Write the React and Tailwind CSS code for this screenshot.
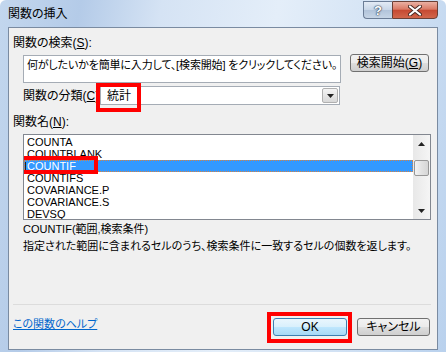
import React from 'react'

const ITEMS = ['COUNTA', 'COUNTBLANK', 'COUNTIF', 'COUNTIFS', 'COVARIANCE.P', 'COVARIANCE.S', 'DEVSQ']

function Arrow({ up }) {
  return (
    <svg width="7" height="4" viewBox="0 0 7 4">
      {up ? <path d="M0 4 L7 4 L3.5 0 Z" fill="#222" /> : <path d="M0 0 L7 0 L3.5 4 Z" fill="#222" />}
    </svg>
  )
}

export default function App() {
  return (
    <div className="w-[446px] h-[352px] overflow-hidden flex flex-col rounded-t-[6px] bg-[linear-gradient(100deg,#c3d7ee_0%,#b4cbe8_16%,#d5e3f4_32%,#e4eef9_55%,#d2e2f4_78%,#b9d1ed_100%)] font-['Liberation_Sans','Noto_Sans_CJK_JP',sans-serif] [font-feature-settings:'palt'] text-black">
      {/* title bar */}
      <div className="h-[27px] flex items-start shrink-0">
        <div className="pl-[8px] pt-[6px] text-[12px] leading-[16px]">関数の挿入</div>
        <div className="ml-auto mr-[8px] mt-[1px] flex h-[18px]">
          <div className="w-[29px] h-[18px] rounded-bl-[4px] border border-r-0 border-[#6b7d96] bg-[linear-gradient(180deg,#e3ebf5_0%,#c9d7e8_48%,#b2c4da_52%,#c6d5e6_100%)] flex items-center justify-center text-[13px] font-bold leading-none text-white [text-shadow:0_0_1px_#34465e,0_0_1px_#34465e,0_0_2px_#34465e]">?</div>
          <div className="w-[46px] h-[18px] rounded-br-[4px] border border-[#6b4036] bg-[linear-gradient(180deg,#eab0a3_0%,#da7a66_45%,#c64a32_52%,#d2664b_100%)] flex items-center justify-center">
            <svg width="14" height="11" viewBox="0 0 14 11">
              <path d="M2 1.5 L12 9.5 M12 1.5 L2 9.5" stroke="#4a2a24" strokeWidth="4" strokeLinecap="round" />
              <path d="M2 1.5 L12 9.5 M12 1.5 L2 9.5" stroke="#fff" strokeWidth="2.2" strokeLinecap="round" />
            </svg>
          </div>
        </div>
      </div>

      {/* client area */}
      <div className="mx-[8px] mb-[2px] flex-1 border border-[#7a8ba1] bg-[#f0f0f0] flex flex-col text-[12px] leading-[16px]">
        <div className="mt-[7px] pl-[4px]">関数の検索(<span className="underline">S</span>):</div>

        <div className="mt-[4px] pl-[14px] flex items-start">
          <div className="w-[318px] h-[28px] border border-[#a5acb5] bg-white pl-[3px] pt-[1px] text-[11px] tracking-[-0.15px] whitespace-nowrap overflow-hidden">
            何がしたいかを簡単に入力して、[検索開始] をクリックしてください。
          </div>
          <button className="ml-[9px] -mt-[1px] w-[79px] h-[18px] rounded-[3px] border border-[#707070] bg-[linear-gradient(180deg,#f2f2f2_0%,#ebebeb_48%,#dddddd_52%,#cfcfcf_100%)] flex items-center justify-center leading-none whitespace-nowrap">
            検索開始(<span className="underline">G</span>)
          </button>
        </div>

        <div className="mt-[3px] pl-[14px] flex items-center h-[19px]">
          <div className="w-[77px] whitespace-nowrap">関数の分類(<span className="underline">C</span>):</div>
          <div className="relative w-[240px] h-[19px] border border-[#a5acb5] bg-white flex items-center">
            <span className="pl-[6px]">統計</span>
            <div className="ml-auto mr-[1px] w-[16px] h-[15px] border border-[#b0b0b0] rounded-[2px] bg-[linear-gradient(180deg,#f4f4f4_0%,#e6e6e6_50%,#d8d8d8_100%)] flex items-center justify-center">
              <Arrow />
            </div>
            <div className="absolute left-[-5px] top-[-4px] w-[45px] h-[29px] border-[4px] border-[#f00]" />
          </div>
        </div>

        <div className="mt-[9px] pl-[4px]">関数名(<span className="underline">N</span>):</div>

        <div className="mt-[4px] ml-[14px] w-[408px] h-[86px] border border-[#828790] bg-white flex overflow-hidden">
          <div className="flex-1 pt-[1px] text-[11px] leading-[12px]">
            {ITEMS.map((it) => (
              it === 'COUNTIF' ? (
                <div key={it} className="relative h-[12px] bg-[#3399ff] text-white border border-dotted border-[#d9823f] pl-[2px] leading-[10px]">
                  <span className="absolute left-0 top-[1px] w-[1px] h-[9px] bg-[#222]" />
                  {it}
                  <div className="absolute left-[-6px] top-[-5px] w-[79px] h-[18px] border-[4px] border-[#f00]" />
                </div>
              ) : (
                <div key={it} className="h-[12px] pl-[3px]">{it}</div>
              )
            ))}
          </div>
          <div className="w-[17px] bg-[linear-gradient(90deg,#e8e8e8,#f5f5f5)] flex flex-col items-center">
            <div className="h-[17px] flex items-center justify-center"><Arrow up /></div>
            <div className="mt-[8px] w-[15px] h-[16px] rounded-[2px] border border-[#979797] bg-[linear-gradient(90deg,#f3f3f3,#e2e2e2_50%,#d6d6d6)]" />
            <div className="mt-auto h-[17px] flex items-center justify-center"><Arrow /></div>
          </div>
        </div>

        <div className="mt-[1px] pl-[14px] leading-[17px] text-[11px]">
          <div>COUNTIF(範囲,検索条件)</div>
          <div className="whitespace-nowrap">指定された範囲に含まれるセルのうち、検索条件に一致するセルの個数を返します。</div>
        </div>

        <div className="mt-[49px] ml-[4px] w-[418px] h-[1px] bg-[#dcdcdc]" />

        <div className="mt-[11px] pl-[4px] pr-[7px] flex items-start">
          <a className="text-[11px] text-[#0066cc] underline">この関数のヘルプ</a>
          <div className="ml-auto mt-[2px] relative">
            <button className="w-[74px] h-[18px] rounded-[3px] border border-[#3c7fb1] bg-[linear-gradient(180deg,#eaf6fd_0%,#d9f0fc_48%,#bee6fd_52%,#a7d9f5_100%)] flex items-center justify-center leading-none">OK</button>
            <div className="absolute left-[-6px] top-[-6px] w-[85px] h-[31px] border-[4px] border-[#f00]" />
          </div>
          <button className="ml-[10px] mt-[2px] w-[73px] h-[18px] rounded-[3px] border border-[#707070] bg-[linear-gradient(180deg,#f2f2f2_0%,#ebebeb_48%,#dddddd_52%,#cfcfcf_100%)] flex items-center justify-center leading-none">キャンセル</button>
        </div>
      </div>
    </div>
  )
}
